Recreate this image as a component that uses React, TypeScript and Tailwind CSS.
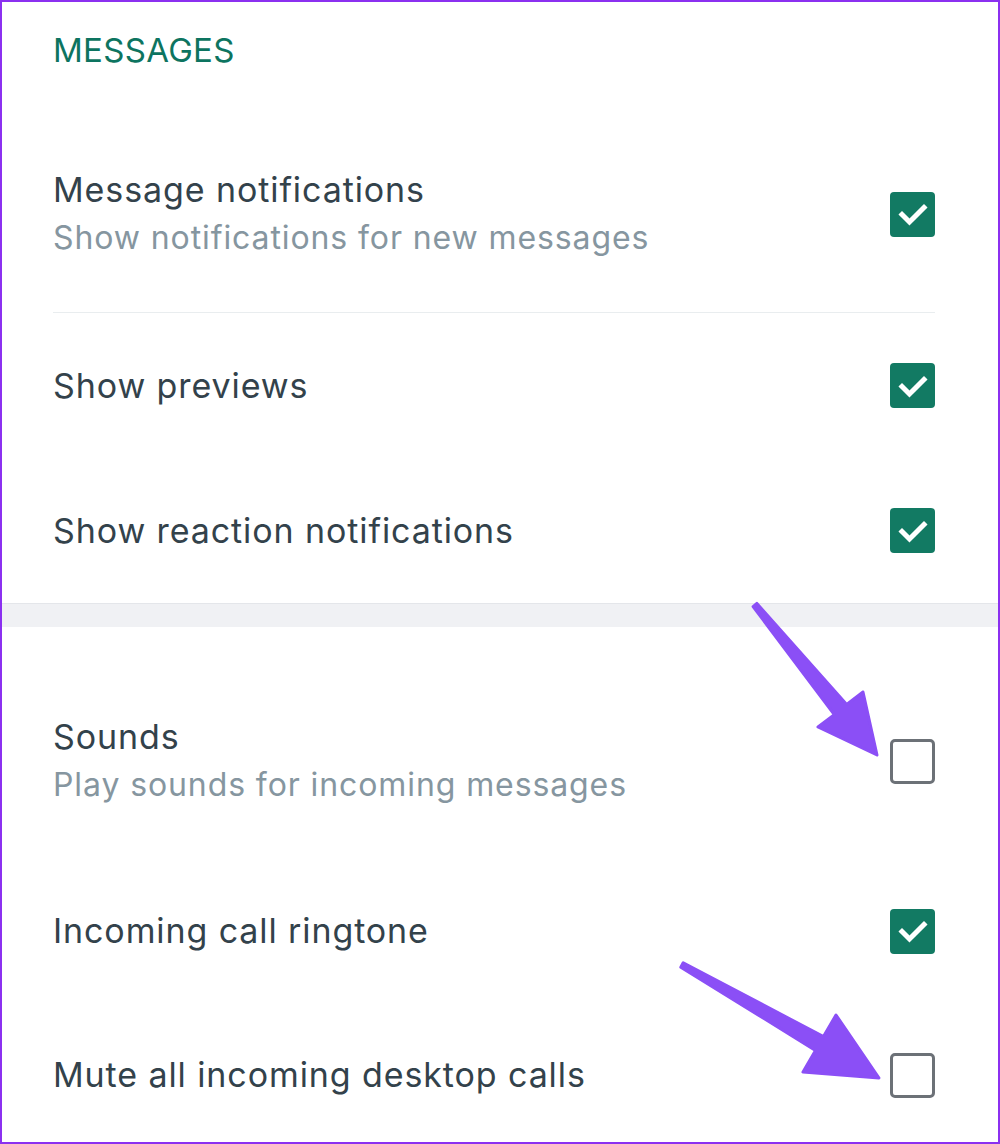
import React from "react";

function Check({ on }: { on: boolean }) {
  if (on) {
    return (
      <div className="w-[45px] h-[45px] rounded-[4px] bg-[#127a63] flex items-center justify-center shrink-0">
        <svg width="32" height="32" viewBox="0 0 32 32">
          <path d="M5 16.5 L12.5 24 L27 9.5" fill="none" stroke="#ffffff" strokeWidth="5" strokeLinecap="square" strokeLinejoin="miter" />
        </svg>
      </div>
    );
  }
  return <div className="w-[45px] h-[45px] rounded-[5px] border-[3px] border-[#6c7177] bg-white shrink-0" />;
}

function Row({ title, sub, on, h }: { title: string; sub?: string; on: boolean; h: string }) {
  return (
    <div className={`flex items-center justify-between ${h}`}>
      <div className="flex flex-col">
        <div className="text-[34px] leading-[48px] tracking-[0.9px] text-[#33424b]">{title}</div>
        {sub && <div className="text-[32px] leading-[48px] tracking-[0.9px] text-[#8696a0]">{sub}</div>}
      </div>
      <Check on={on} />
    </div>
  );
}

export default function App() {
  return (
    <div
      className="relative w-[1000px] h-[1144px] border-2 border-[#8b30f0] bg-white overflow-hidden"
      style={{ fontFamily: "Inter, 'Noto Sans', sans-serif" }}
    >
      <div className="pl-[51px] pr-[63px]">
        <div className="h-[114px] pb-[18px] flex items-center">
          <div className="text-[33px] leading-[36px] text-[#0d7460] tracking-[0.3px]">MESSAGES</div>
        </div>
        <Row title="Message notifications" sub="Show notifications for new messages" on={true} h="h-[196px]" />
        <div className="h-px bg-[#e9edef]" />
        <Row title="Show previews" on={true} h="h-[145px]" />
        <Row title="Show reaction notifications" on={true} h="h-[145px]" />
      </div>
      <div className="h-[24px] bg-[#f0f1f4] border-t border-[#e4e6ea]" />
      <div className="pl-[51px] pr-[63px] pt-[36px]">
        <Row title="Sounds" sub="Play sounds for incoming messages" on={false} h="h-[196px]" />
        <Row title="Incoming call ringtone" on={true} h="h-[144px]" />
        <Row title="Mute all incoming desktop calls" on={false} h="h-[144px]" />
      </div>
      <svg className="absolute left-[-2px] top-[-2px] pointer-events-none" width="1000" height="1144" viewBox="0 0 1000 1144">
        <polygon
          points="753.1,606.6 834.3,714.6 818,727 877,755 863,692 846.7,704.4 756.9,603.4"
          fill="#8b4ff6"
          stroke="#8b4ff6"
          strokeWidth="3"
          strokeLinejoin="round"
        />
        <polygon
          points="680.8,967.2 815.5,1050.4 803,1072 879,1078 836,1015 823.5,1036.6 683.2,962.8"
          fill="#8b4ff6"
          stroke="#8b4ff6"
          strokeWidth="3"
          strokeLinejoin="round"
        />
      </svg>
    </div>
  );
}
